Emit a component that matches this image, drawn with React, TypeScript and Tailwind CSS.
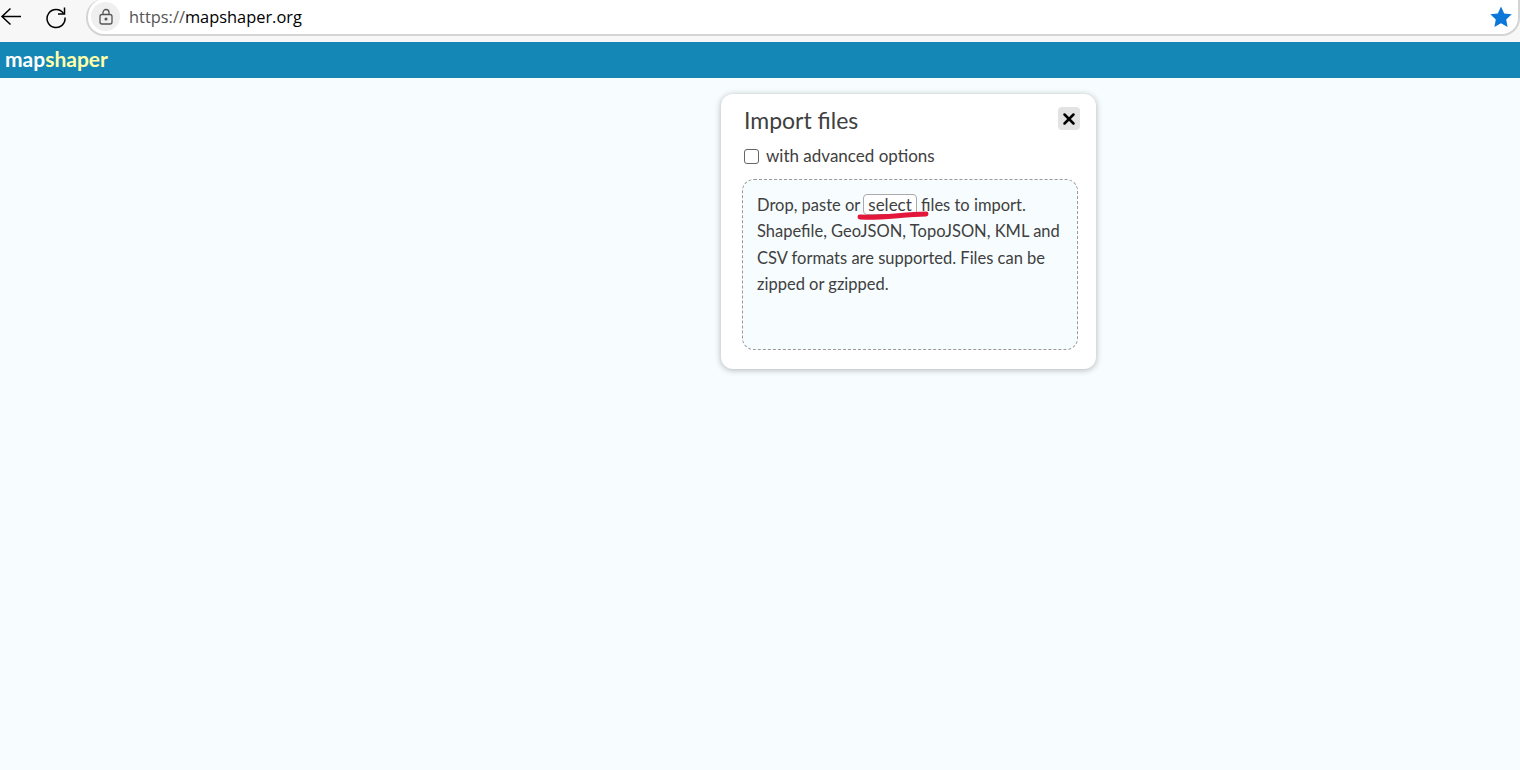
import { X } from "lucide-react";

const font = { fontFamily: '"Lato", "Noto Sans", sans-serif' };

function BrowserBar() {
    return (
        <div className="h-[42px] bg-[#f7f7f7] flex items-start">
            <div className="w-[86px] h-[33px] shrink-0 flex items-center text-black">
                <svg width="24" height="24" viewBox="0 0 24 24" fill="none" stroke="currentColor" strokeWidth="1.5">
                    <path d="M21 11.500H2M10.500 3.500l-8.500 8 8.500 8" />
                </svg>
                <svg width="24" height="24" viewBox="0 0 24 24" fill="none" stroke="currentColor" strokeWidth="1.5" className="ml-[20px]">
                    <path d="M19.500 8.500A9 9 0 1 0 21 12.500" />
                    <path d="M20.500 2.500v6.500h-6.500" />
                </svg>
            </div>
            <div className="flex-1 h-[37px] bg-white rounded-b-[18px] rounded-tl-[18px] border-l-2 border-b-2 border-r-2 border-[#d4d4d4] flex items-center -mt-[1px]">
                <div className="w-[29px] h-[29px] rounded-full bg-[#efefef] flex items-center justify-center ml-[3px]">
                    <svg width="18" height="18" viewBox="0 0 18 18" fill="none" stroke="#555" strokeWidth="1.3">
                        <rect x="3" y="6.500" width="12" height="9.500" rx="2" />
                        <path d="M6 6.500V4.500a3 3 0 0 1 6 0v2" />
                        <circle cx="9" cy="11" r="0.9" fill="#555" />
                    </svg>
                </div>
                <span className="ml-[9px] text-[16.4px] text-black relative top-[1px]" style={{ fontFamily: '"Open Sans", sans-serif' }}>
                    <span className="text-[#555]">https://</span>mapshaper.org
                </span>
                <svg width="24" height="24" viewBox="0 0 24 24" fill="#0b77d9" className="ml-auto mr-[5px]">
                    <path d="M12 1.500l3.200 6.900 7.500.9-5.500 5.200 1.400 7.500-6.600-3.700-6.600 3.700 1.400-7.500L1.300 9.300l7.500-.9z" />
                </svg>
            </div>
        </div>
    );
}

export default function App() {
    return (
        <div className="h-[770px] flex flex-col bg-[#f7fdff] overflow-hidden" style={font}>
            <BrowserBar />

            <header className="h-[36px] bg-[#1587b7] flex items-center px-[5px] pb-[2px] text-[21px] font-bold shrink-0">
                <span className="text-white">map</span>
                <span className="text-[#ffffa8]">shaper</span>
            </header>

            <main className="flex-1 pt-[16px] pl-[721px]">
                <div className="w-[375px] h-[275px] bg-white rounded-[12px] shadow-[0_1px_6px_rgba(0,0,0,0.3)] pl-[21px] pr-[22px] pt-[12px] text-[#404040]">
                    <div className="flex items-center justify-between">
                        <h1 className="text-[23px] leading-[28px] ml-[2px]">Import files</h1>
                        <button className="w-[22px] h-[23px] rounded-[4px] bg-[#e3e3e3] flex items-center justify-center text-black -mr-[6px] -mt-[3px]">
                            <X size={18} strokeWidth={3.4} />
                        </button>
                    </div>

                    <label className="flex items-center mt-[10px] ml-[2px] text-[17px] leading-[24px]">
                        <span className="w-[15px] h-[15px] rounded-[3px] border border-[#666] bg-white" />
                        <span className="ml-[7px]">with advanced options</span>
                    </label>

                    <div className="mt-[11px] w-[336px] h-[171px] rounded-[12px] border border-dashed border-[#999] bg-[#f7fdff] px-[14px] pt-[12px] text-[16.5px] leading-[26.4px]">
                        <div className="relative whitespace-nowrap">
                            Drop, paste or{" "}
                            <span className="inline-block h-[21px] -ml-[1px] text-[17px] leading-[20px] border border-[#aaa] rounded-[4px] px-[4px] bg-white">
                                select
                            </span>{" "}
                            files to import.
                            <svg width="72" height="9" viewBox="0 0 72 9" className="absolute left-[100px] top-[19px]">
                                <path d="M3 6C25 7 45 3.500 69 3" fill="none" stroke="#e3173a" strokeWidth="5" strokeLinecap="round" />
                            </svg>
                        </div>
                        <div className="whitespace-nowrap">Shapefile, GeoJSON, TopoJSON, KML and</div>
                        <div className="whitespace-nowrap">CSV formats are supported. Files can be</div>
                        <div className="whitespace-nowrap">zipped or gzipped.</div>
                    </div>
                </div>
            </main>
        </div>
    );
}
